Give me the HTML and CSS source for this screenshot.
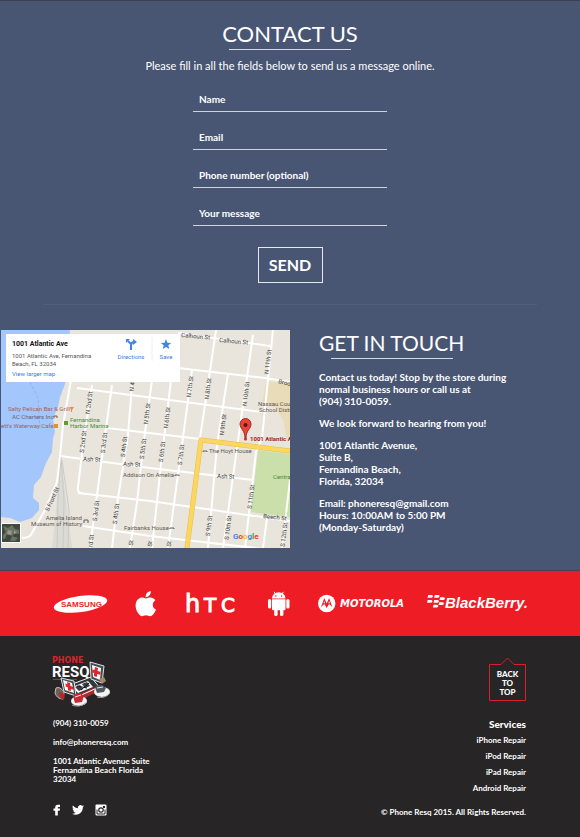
FILE: index.html
```html
<!DOCTYPE html>
<html lang="en">
<head>
<meta charset="utf-8">
<meta name="viewport" content="width=device-width, initial-scale=1">
<title>Phone Resq - Contact</title>
<link rel="stylesheet" href="styles.css">
</head>
<body>
<main class="main">
  <section class="contact">
    <h1 class="title">CONTACT US</h1>
    <p class="intro">Please fill in all the fields below to send us a message online.</p>
    <form class="form">
      <input class="field" type="text" placeholder="Name" aria-label="Name">
      <input class="field" type="email" placeholder="Email" aria-label="Email">
      <input class="field" type="tel" placeholder="Phone number (optional)" aria-label="Phone number (optional)">
      <input class="field" type="text" placeholder="Your message" aria-label="Your message">
      <button class="send" type="submit">SEND</button>
    </form>
  </section>

  <section class="touch">
    <svg class="map" viewBox="1 330 289 218" role="img" aria-label="Map of 1001 Atlantic Ave">
      <rect x="0" y="330" width="290" height="218" fill="#e9e5dc"/>
      <path d="M0 330H70L65 384L60 397L58 407L53 418L55 432L53 438L52 452L46 463L41 477L34 485L33 498L39 503L39 510L32 518L20 522L10 518L0 517Z" fill="#a3c6fc"/>
      <path d="M30 382L38 398L40 430" fill="none" stroke="#8fb2e6" stroke-width="1" stroke-dasharray="3 2"/>
      <path d="M266 382H290V440H287L283 420L275 407L262 404Z" fill="#e9dcb8"/>
      <path d="M258 450L290 454V517L251 512Z" fill="#cadfaa"/>
      <path d="M61 458L57 500L52 548H72L66 500Z" fill="#dcdad4"/>
      <path d="M61 456L58 500L57 548M61 456L64 500L63 548M62 460L69 510L68 548" fill="none" stroke="#cccac5" stroke-width="1"/>
      <g fill="none" stroke="#fff" stroke-width="2">
        <path d="M178 333L270 346M178 368L265 378L290 382M77 388L262 412M107 428L200 439M60 456L150 468L253 480M78 493L150 501L290 521M83 526L150 536L290 552"/>
        <path d="M71 380L63 425L60 456L57 482L45 510L32 533Q30 538 22 538M92 385L83 445L78 487Q77 493 82 493M112 385L105 435L97 495L90 548M132 385L128 435L118 498L112 548M152 380L143 448L137 502L130 548M171 380L162 455L152 548M192 370L182 445L168 548M216 330L205 405L200 438M228 374L217 445L208 548M253 335L242 412L236 455L223 548M273 330L262 438L256 452L245 548M267 518L263 548M290 480L282 548"/>
      </g>
      <path d="M290 451L201 440L187 548" fill="none" stroke="#e8bd49" stroke-width="5" stroke-linejoin="round"/>
      <path d="M290 451L201 440L187 548" fill="none" stroke="#fbd75f" stroke-width="4" stroke-linejoin="round"/>
      <g class="map-street">
        <text x="181" y="337" transform="rotate(5 181 337)">Calhoun St</text>
        <text x="219" y="342" transform="rotate(5 219 342)">Calhoun St</text>
        <text x="278" y="383" transform="rotate(15 278 383)">Broo</text>
        <text x="83" y="461" transform="rotate(3 83 461)">Ash St</text>
        <text x="123" y="466" transform="rotate(3 123 466)">Ash St</text>
        <text x="217" y="478" transform="rotate(3 217 478)">Ash St</text>
        <text x="263" y="518" transform="rotate(6 263 518)">Beech St</text>
      </g>
      <g class="map-street map-street-up">
        <text transform="translate(91 403) rotate(-83)">N 2nd St</text>
        <text transform="translate(134 387) rotate(-83)">N 4</text>
        <text transform="translate(149 414) rotate(-83)">N 5th St</text>
        <text transform="translate(169 418) rotate(-83)">N 6th St</text>
        <text transform="translate(192 387) rotate(-83)">N 7th St</text>
        <text transform="translate(210 389) rotate(-83)">N 8th St</text>
        <text transform="translate(225 425) rotate(-83)">N 9th St</text>
        <text transform="translate(248 394) rotate(-83)">N 10th St</text>
        <text transform="translate(270 362) rotate(-83)">N 11th St</text>
        <text transform="translate(85 442) rotate(-83)">S 2nd St</text>
        <text transform="translate(106 443) rotate(-83)">S 3rd St</text>
        <text transform="translate(126 447) rotate(-83)">S 4th St</text>
        <text transform="translate(145 449) rotate(-83)">S 5th St</text>
        <text transform="translate(164 452) rotate(-83)">S 6th St</text>
        <text transform="translate(183 455) rotate(-83)">S 7th St</text>
        <text transform="translate(98 511) rotate(-83)">S 3rd St</text>
        <text transform="translate(118 514) rotate(-83)">S 4th St</text>
        <text transform="translate(54 500) rotate(-66)">S Front St</text>
        <text transform="translate(253 497) rotate(-83)">S 11th St</text>
        <text transform="translate(211 526) rotate(-83)">S 9th St</text>
        <text transform="translate(230 528) rotate(-83)">S 10th St</text>
        <text transform="translate(286 535) rotate(-83)">S 12th St</text>
        <text transform="translate(93 541) rotate(-83)">rd St</text>
        <text transform="translate(133 543) rotate(-83)">St</text>
        <text transform="translate(152 544) rotate(-83)">St</text>
        <text transform="translate(171 544) rotate(-83)">St</text>
      </g>
      <g class="map-place">
        <text x="8" y="411" fill="#a3625a">Salty Pelican Bar &amp; Grill</text>
        <text x="12" y="419" fill="#6b6070">AC Charters Inc</text>
        <text x="1" y="428" fill="#a3625a">ett's Waterway Cafe</text>
        <text x="70" y="422" fill="#4f8a3c">Fernandina</text>
        <text x="70" y="428" fill="#4f8a3c">Harbor Marina</text>
        <text x="258" y="406">Nassau Coun</text>
        <text x="259" y="412">School Distri</text>
        <text x="209" y="453">The Hoyt House</text>
        <text x="123" y="477">Addison On Amelia</text>
        <text x="273" y="479" fill="#4f8a3c">Central</text>
        <text x="82" y="520" text-anchor="end">Amelia Island</text>
        <text x="82" y="526" text-anchor="end">Museum of History</text>
        <text x="124" y="530">Fairbanks House</text>
      </g>
      <path d="M70 407h4l-2 3v2h-1v-2zM54 424h4v4h-4z" fill="#f08b32"/>
      <path d="M64 421h4v4h-4z" fill="#5aa02c"/>
      <path d="M54 418v-2h3v2M203 452v-1h4v1M175 476v-1h4v1M170 529v-1h4v1M84 523v-3h4v3" fill="none" stroke="#665f5a"/>
      <text class="map-target" x="250" y="441">1001 Atlantic A</text>
      <path d="M245 438C245 430 240 429 240 424a5.500 5.500 0 0 1 11 0C251 429 246 430 246 438Z" fill="#ea4335" stroke="#9c2b22" stroke-width="1"/>
      <circle cx="245.500" cy="425" r="2" fill="#5b1712"/>
      <circle cx="245.500" cy="439" r="1.500" fill="#d3261d"/>
      <text class="map-google" x="233" y="539"><tspan fill="#4285f4">G</tspan><tspan fill="#ea4335">o</tspan><tspan fill="#fbbc05">o</tspan><tspan fill="#4285f4">g</tspan><tspan fill="#34a853">l</tspan><tspan fill="#ea4335">e</tspan></text>
      <path d="M1 523h20v20H1z" fill="#fff"/>
      <path d="M2 524h18v18H2z" fill="#3f4a3d"/>
      <path d="M3 526l5 2 4-3 3 4 4 1v4l-4-1-3 3-5-2-2 5H3v-4l3-3zM12 536l6 2-3 3h-5z" fill="#697365"/>
      <path d="M8 530l4 1-1 4-4-1zM14 530l3 3-3 1z" fill="#9a978b"/>
      <rect x="6" y="334" width="174" height="48" fill="#fff"/>
      <text class="map-name" x="12" y="346">1001 Atlantic Ave</text>
      <g class="map-info">
        <text x="12" y="358">1001 Atlantic Ave, Fernandina</text>
        <text x="12" y="366">Beach, FL 32034</text>
        <text class="map-link" x="12" y="376">View larger map</text>
        <text class="map-link" x="131" y="359" text-anchor="middle">Directions</text>
        <text class="map-link" x="166" y="359" text-anchor="middle">Save</text>
      </g>
      <path d="M152 337v24" stroke="#eee"/>
      <path d="M131 350V344L128 341M131 346Q131 342 134 342" fill="none" stroke="#4285e8" stroke-width="2"/>
      <path d="M133 339l4 3-4 3zM126 343v-4h4z" fill="#4285e8"/>
      <path d="M166 339l1.400 3.700 3.900.2-3 2.400 1 3.800-3.300-2.100-3.300 2.100 1-3.800-3-2.400 3.900-.2z" fill="#4285e8"/>
    </svg>
    <div class="touch-text">
      <h2 class="title title-left">GET IN TOUCH</h2>
      <p>Contact us today! Stop by the store during<br>normal business hours or call us at<br>(904) 310-0059.</p>
      <p>We look forward to hearing from you!</p>
      <p>1001 Atlantic Avenue,<br>Suite B,<br>Fernandina Beach,<br>Florida, 32034</p>
      <p>Email: phoneresq@gmail.com<br>Hours: 10:00AM to 5:00 PM<br>(Monday-Saturday)</p>
    </div>
  </section>
</main>

<section class="brands" aria-label="Brands">
  <svg width="58" height="26" viewBox="0 0 58 26">
    <ellipse cx="26.500" cy="13" rx="27" ry="8" transform="rotate(-8 26.500 13)" fill="#fff"/>
    <text class="brand-samsung" x="7" y="16">SAMSUNG</text>
  </svg>
  <svg width="28" height="26" viewBox="0 0 28 26" fill="#fff">
    <path d="M10.500 7.300C8 6.200 5.800 6.200 3.400 7.900C-.7 11 .1 18.500 3.400 22.600C5.800 25.800 7 25.300 8.600 24.700C10.200 24 11.600 24 13.200 24.700C15.500 25.600 16.500 25.400 18.300 23.300C19.700 21.600 20.500 20.100 20.900 18.600C17 16.800 16.600 11.500 20.400 9.300C18.500 6.700 15.500 5.900 12.700 7Q11.500 7.600 10.500 7.300Z"/>
    <path d="M10.600 6.200C10.300 3 12.700.4 15.800 0C16.200 3.200 13.700 6.200 10.600 6.200Z"/>
  </svg>
  <svg width="59" height="26" viewBox="0 0 59 26" fill="#fff">
    <text class="brand-htc" x="-1" y="21">h</text>
    <text class="brand-htc brand-htc-small" x="18" y="21">T</text>
    <text class="brand-htc brand-htc-small" x="35" y="21">C</text>
  </svg>
  <svg width="27" height="26" viewBox="0 0 27 26" fill="#fff">
    <path d="M4 7.500A6.700 6.200 0 0 1 17.500 7.500Z"/>
    <path d="M6 .8L7.800 3.500M15.500.8L13.700 3.500" stroke="#fff" stroke-width="1"/>
    <path d="M4 8.300H17.500V18Q17.500 19.200 16.300 19.200H5.200Q4 19.200 4 18Z"/>
    <rect x="0" y="8" width="3.200" height="9.500" rx="1.600"/>
    <rect x="18.300" y="8" width="3.200" height="9.500" rx="1.600"/>
    <rect x="6.200" y="17" width="3.400" height="8" rx="1.600"/>
    <rect x="12" y="17" width="3.400" height="8" rx="1.600"/>
    <circle cx="7.900" cy="5" r=".7" fill="#ee1c25"/><circle cx="13.600" cy="5" r=".7" fill="#ee1c25"/>
  </svg>
  <svg width="86" height="26" viewBox="0 0 86 26" fill="#fff">
    <circle cx="8.700" cy="12.500" r="8.700"/>
    <path d="M2.900 16.500L6.300 7L8.700 12.500L11.100 7L14.500 16.500Q12.500 13.500 11 13L8.700 17L6.400 13Q5 13.500 2.900 16.500Z" fill="#ee1c25"/>
    <path d="M5.500 12.200L6.300 10L7.100 12.200ZM10.300 12.200L11.100 10L11.900 12.200Z"/>
    <text class="brand-motorola" x="22" y="16">MOTOROLA</text>
  </svg>
  <svg width="99" height="26" viewBox="0 0 99 26" fill="#fff">
    <path d="M1.200 4h3.500q1.500.2 1.200 1.500-.3 1.300-1.800 1.300H.5zM7.800 4h3.500q1.500.2 1.200 1.500-.3 1.300-1.800 1.300H7.100zM.7 9h3.500q1.500.2 1.200 1.500-.3 1.300-1.800 1.300H0zM7.200 9h3.500q1.500.2 1.200 1.500-.3 1.300-1.800 1.300H6.500zM13.200 6.300h3.500q1.500.2 1.200 1.500-.3 1.300-1.800 1.300h-3.600zM12.200 11.300h3.500q1.500.2 1.200 1.500-.3 1.300-1.800 1.300h-3.600zM6.500 13.800H10q1.500.2 1.200 1.500-.3 1.300-1.800 1.300H5.800z"/>
    <text class="brand-blackberry" x="18" y="17">BlackBerry.</text>
  </svg>
</section>

<footer class="footer">
  <div class="footer-left">
    <svg class="logo" width="58" height="51" viewBox="0 0 58 51">
      <text class="logo-phone" x="-1" y="6">PHONE</text>
      <text class="logo-resq" x="-1" y="20">RESQ</text>
      <path d="M0 22.500H24" stroke="#c4252b" stroke-width="1"/>
      <path d="M14 29L38 20L47 31L24 42Z" fill="#33373c" stroke="#f2f2f2" stroke-width="1"/>
      <path d="M19 30L35 24L40 30L25 36Z" fill="#f5f5f5"/>
      <path d="M22 30L27 28L30 32L26 34ZM29 27L34 25L37 29L32 31Z" fill="#3b3f45"/>
      <path d="M24 29L34 31M28 33L36 26" stroke="#15171a" stroke-width="1"/>
      <path d="M37 5L51 9L49 26L38 22Z" fill="#444e59" stroke="#dce1e6" stroke-width="1"/>
      <path d="M39 8L48 11L47 23L40 20Z" fill="#fff"/>
      <path d="M42 10l3 1-.4 3 3 .8-.4 3-3-.7-.4 3-3-1 .4-3-2-.6.3-3 2 .6z" fill="#e3242b"/>
      <path d="M8 21L21 24L23 39L11 35Z" fill="#444e59" stroke="#dce1e6" stroke-width="1"/>
      <path d="M10 23L19 26L21 36L12 33Z" fill="#fff"/>
      <path d="M14 25l3 1 .4 3 2.600.7.300 3-2.500-.7.200 2-3-.8-.3-3-2-.6-.3-3 2 .6z" fill="#e3242b"/>
      <path d="M22 39L45 29L46 34L24 45Z" fill="#a82b30"/>
      <path d="M24 40L44 31" stroke="#fff" stroke-width="1"/>
      <ellipse cx="26" cy="44" rx="8" ry="5" fill="#f4f4f4"/>
      <ellipse cx="49" cy="35" rx="8" ry="5" fill="#f4f4f4"/>
      <path d="M20 39Q26 33 31 39L29 45L22 46Z" fill="#c52c31"/>
      <path d="M42 30Q48 25 53 31L51 35L44 36Z" fill="#505861"/>
      <path d="M22 40L28 38M44 31L50 30" stroke="#e7e7e7" stroke-width="1"/>
      <path d="M3 31Q7 29 11 35L10 42Q4 42 2 36Z" fill="#6a6259" stroke="#c7bdae" stroke-width="1"/>
      <path d="M6 35L12 37L11 43L7 41Z" fill="#b4272d"/>
      <path d="M46 22l5-2 2 4-4 3z" fill="#a7856b"/>
      <path d="M19 48Q26 51 33 46M44 40Q51 42 56 37" fill="none" stroke="#9ea4aa" stroke-width="1"/>
    </svg>
    <p>(904) 310-0059</p>
    <p>info@phoneresq.com</p>
    <p>1001 Atlantic Avenue Suite<br>Fernandina Beach Florida<br>32034</p>
    <div class="social">
      <a href="#" aria-label="Facebook"><svg width="8" height="12" viewBox="0 0 8 12"><path d="M2.200 11.500V6.700H.5V4.400H2.200V3.200Q2.200.7 4.800.7H7V2.900H5.500Q4.800 2.900 4.800 3.600V4.400H7L6.700 6.700H4.800V11.500Z" fill="#fff"/></svg></a>
      <a href="#" aria-label="Twitter"><svg width="12" height="12" viewBox="0 0 24 24"><path d="M24 4.600a10 10 0 0 1-2.800.8 5 5 0 0 0 2.100-2.700 10 10 0 0 1-3.100 1.200A4.900 4.900 0 0 0 11.800 8.400 14 14 0 0 1 1.700 3.100a4.900 4.900 0 0 0 1.500 6.600 5 5 0 0 1-2.200-.6c0 2.400 1.700 4.400 3.900 4.900a5 5 0 0 1-2.200.1 4.900 4.900 0 0 0 4.600 3.400A10 10 0 0 1 0 19.500 14 14 0 0 0 7.500 21.700C17 21.700 22 13.500 21.500 7.100A10 10 0 0 0 24 4.600Z" fill="#fff"/></svg></a>
      <a href="#" aria-label="Instagram"><svg width="12" height="12" viewBox="0 0 12 12"><rect x=".5" y=".5" width="11" height="11" rx="1" fill="#fff"/><path d="M2 5.500V10h8V5.500" fill="none" stroke="#272526" stroke-width="1"/><circle cx="6" cy="6" r="2.200" fill="#fff" stroke="#272526" stroke-width="1.200"/><rect x="8" y="2" width="2" height="2" fill="#272526"/></svg></a>
    </div>
  </div>
  <div class="footer-right">
    <a class="top-link" href="#">
      <svg class="top-frame" width="37" height="44" viewBox="0 0 37 44" aria-hidden="true"><path d="M.5 7.500H12L18.500 1L25 7.500H36.500V43.500H.5Z" fill="none" stroke="#d81f2b" stroke-width="1"/></svg>
      BACK<br>TO<br>TOP</a>
    <h3 class="services-title">Services</h3>
    <ul class="services">
      <li><a href="#">iPhone Repair</a></li>
      <li><a href="#">iPod Repair</a></li>
      <li><a href="#">iPad Repair</a></li>
      <li><a href="#">Android Repair</a></li>
    </ul>
    <p class="copyright">© Phone Resq 2015. All Rights Reserved.</p>
  </div>
</footer>
</body>
</html>
```
FILE: styles.css
```css
* {
  box-sizing: border-box;
  margin: 0;
  padding: 0;
}

body {
  background: #272526;
  color: #fff;
  font-family: Lato, "Open Sans", sans-serif;
  font-size: 10px;
  font-weight: 700;
  line-height: 12px;
}

a {
  color: inherit;
  text-decoration: none;
}

svg {
  display: block;
  overflow: visible;
}

.main {
  background: #485674;
  border-top: 1px solid #3f3f52;
  border-bottom: 1px solid #4b3e56;
  padding-bottom: 22px;
}

.contact {
  display: flex;
  flex-direction: column;
  align-items: center;
  margin: 0 43px;
  padding: 19px 0 21px;
  border-bottom: 1px solid #515f7c;
}

.title {
  display: flex;
  flex-direction: column;
  align-items: center;
  gap: 2px;
  font-size: 22px;
  font-weight: 400;
  line-height: 27px;
}

.title::after {
  content: "";
  width: 122px;
  height: 1px;
  background: #d5d9e0;
}

.intro {
  margin-top: 10px;
  font-size: 11px;
  font-weight: 400;
}

.form {
  display: flex;
  flex-direction: column;
  align-items: center;
  gap: 14px;
  width: 194px;
  margin-top: 16px;
}

.field {
  width: 100%;
  height: 24px;
  padding: 0 6px 2px;
  border: 0;
  border-bottom: 1px solid #cfd4dc;
  background: none;
  color: #fff;
  font: inherit;
}

.field::placeholder {
  color: #fff;
  opacity: 1;
}

.send {
  width: 65px;
  height: 36px;
  margin-top: 7px;
  padding-bottom: 2px;
  border: 1px solid #e6e9ee;
  background: none;
  color: #fff;
  font-family: inherit;
  font-size: 16px;
  font-weight: 700;
}

.touch {
  display: grid;
  grid-template-columns: 1fr 1fr;
  align-items: start;
  margin-top: 25px;
}

.map {
  width: 100%;
  padding-left: 1px;
  overflow: hidden;
  font-family: Roboto, sans-serif;
  font-weight: 400;
}

.map-street {
  font-size: 6px;
  fill: #3a3a3a;
}

.map-street-up {
  text-anchor: middle;
}

.map-place {
  font-size: 6px;
  fill: #5f5650;
}

.map-target {
  font-size: 6px;
  font-weight: 700;
  fill: #a01c1c;
}

.map-google {
  font-size: 8px;
  font-weight: 700;
}

.map-name {
  font-size: 7px;
  font-weight: 700;
  fill: #111;
}

.map-info {
  font-size: 6px;
  fill: #555;
}

.map-link {
  fill: #3b7de0;
}

.touch-text {
  display: flex;
  flex-direction: column;
  align-items: flex-start;
  gap: 10px;
  padding-left: 29px;
}

.title-left {
  margin-bottom: 2px;
  font-size: 21px;
  line-height: 26px;
}

.brands {
  display: flex;
  justify-content: space-between;
  align-items: center;
  height: 65px;
  padding: 0 54px;
  background: #ee1c25;
}

.brand-samsung {
  font-family: "Liberation Sans", sans-serif;
  font-size: 8px;
  font-weight: 700;
  fill: #ee1c25;
}

.brand-htc {
  font-family: "DejaVu Sans", sans-serif;
  font-size: 24px;
  font-weight: 400;
  stroke: #fff;
  stroke-width: 1px;
}

.brand-htc-small {
  font-size: 20px;
}

.brand-motorola {
  font-family: "DejaVu Sans", sans-serif;
  font-size: 10px;
  font-style: italic;
  font-weight: 700;
}

.brand-blackberry {
  font-family: "Liberation Sans", sans-serif;
  font-size: 15px;
  font-style: italic;
  font-weight: 700;
}

.footer {
  display: flex;
  justify-content: space-between;
  padding: 21px 54px 19px 53px;
  font-size: 8px;
  line-height: 9px;
}

.footer-left {
  display: flex;
  flex-direction: column;
  gap: 10px;
}

.logo {
  margin-bottom: 1px;
}

.logo-phone {
  font-family: "DejaVu Sans", sans-serif;
  font-size: 8px;
  font-weight: 700;
  fill: #d3262d;
}

.logo-resq {
  font-family: Roboto, sans-serif;
  font-size: 15px;
  font-weight: 700;
  fill: #fff;
}

.social {
  display: flex;
  gap: 11px;
  margin-top: 10px;
}

.footer-right {
  display: flex;
  flex-direction: column;
  align-items: flex-end;
  text-align: right;
}

.top-link {
  position: relative;
  width: 37px;
  height: 44px;
  padding-top: 13px;
  font-weight: 900;
  text-align: center;
}

.top-frame {
  position: absolute;
  inset: 0;
}

.services-title {
  margin-top: 17px;
  font-size: 10px;
  font-weight: 900;
  line-height: 12px;
}

.services {
  margin-top: 2px;
  line-height: 16px;
  list-style: none;
}

.copyright {
  margin-top: 12px;
}
```
